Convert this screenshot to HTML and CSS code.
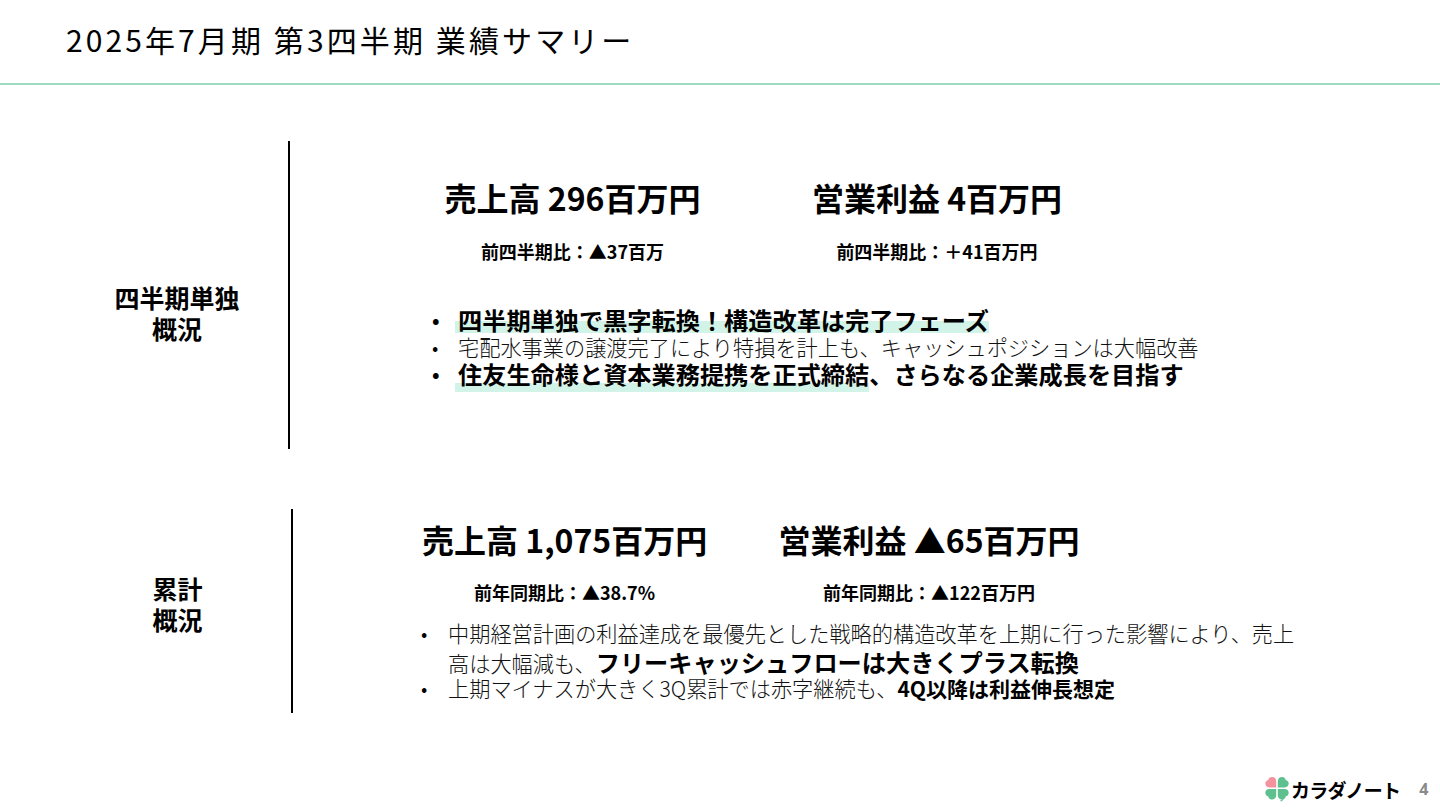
FILE: index.html
```html
<!DOCTYPE html>
<html lang="ja">
<head>
<meta charset="utf-8">
<title>業績サマリー</title>
<link rel="stylesheet" href="styles.css">
</head>
<body>
<div class="slide">
  <header class="head"><h1 class="title">2025年7月期 第3四半期 業績サマリー</h1></header>
  <main class="main">
    <section class="sec sec-q">
      <h2 class="label">四半期単独<br>概況</h2>
      <div class="body">
        <div class="stats">
          <div class="stat stat-q1"><p class="big">売上高 296百万円</p><p class="sub">前四半期比：▲37百万</p></div>
          <div class="stat stat-q2"><p class="big">営業利益 4百万円</p><p class="sub">前四半期比：＋41百万円</p></div>
        </div>
        <ul class="list">
          <li class="li-b"><span class="hl">四半期単独で黒字転換！構造改革は完了フェーズ</span></li>
          <li class="li-n">宅配水事業の譲渡完了により特損を計上も、キャッシュポジションは大幅改善</li>
          <li class="li-b"><span class="hl hl-low">住友生命様と資本業務提携を正式締結</span>、さらなる企業成長を目指す</li>
        </ul>
      </div>
    </section>
    <section class="sec sec-c">
      <h2 class="label">累計<br>概況</h2>
      <div class="body">
        <div class="stats">
          <div class="stat stat-c1"><p class="big">売上高 1,075百万円</p><p class="sub">前年同期比：▲38.7%</p></div>
          <div class="stat stat-c2"><p class="big">営業利益 ▲65百万円</p><p class="sub">前年同期比：▲122百万円</p></div>
        </div>
        <ul class="list list-c">
          <li>中期経営計画の利益達成を最優先とした戦略的構造改革を上期に行った影響により、売上高は大幅減も、<b class="em">フリーキャッシュフローは大きくプラス転換</b></li>
          <li>上期マイナスが大きく3Q累計では赤字継続も、<b class="em2">4Q以降は利益伸長想定</b></li>
        </ul>
      </div>
    </section>
  </main>
  <footer class="foot">
    <svg class="clover" viewBox="0 0 24 26" width="24" height="26" aria-hidden="true">
      <path fill="#f4929e" d="M11.2 11.4V5.2C11.2 2.6 9.4 1 7 1c-2 0-3.400 1.300-3.700 3C1.600 4.300.300 5.700.300 7.600c0 2.300 1.600 3.800 4.100 3.800z"/>
      <path fill="#5fc08f" d="M12.800 11.400V5.200c0-2.600 1.800-4.200 4.200-4.200 2 0 3.400 1.300 3.700 3 1.700.300 3 1.700 3 3.600 0 2.300-1.600 3.800-4.100 3.800z"/>
      <path fill="#5fc08f" d="M11.200 13v6.200c0 2.600-1.800 4.200-4.200 4.200-2 0-3.400-1.300-3.700-3-1.700-.300-3-1.700-3-3.600C.300 14.500 1.900 13 4.400 13z"/>
      <path fill="#5fc08f" d="M12.800 13v6.200c0 2.600 1.800 4.200 4.200 4.200 2 0 3.400-1.300 3.700-3 1.700-.300 3-1.700 3-3.600 0-2.300-1.600-3.800-4.100-3.800z"/>
      <path fill="none" stroke="#5fc08f" stroke-width="1.200" d="M15.500 25c1.200-.4 2-1 2.500-2"/>
    </svg>
    <span class="brand">カラダノート</span>
    <span class="page">4</span>
  </footer>
</div>
</body>
</html>
```
FILE: styles.css
```css
* { box-sizing: border-box; }
html, body { margin: 0; padding: 0; background: #fff; }
body { font-family: "Noto Sans CJK JP", "Noto Sans", sans-serif; color: #000; }
p, h1, h2, ul { margin: 0; padding: 0; }
.slide { width: 1440px; height: 810px; overflow: hidden; display: flex; flex-direction: column; }
.head { height: 85px; border-bottom: 2px solid #9fdcc4; padding: 18px 0 0 66px; flex: none; }
.title { font-size: 30px; font-weight: 400; letter-spacing: 3.1px; line-height: 42px; }
.main { flex: 1; display: flex; flex-direction: column; }
.sec { display: flex; }
.sec-q { height: 308px; margin-top: 56px; }
.sec-c { height: 204px; margin-top: 60px; }
.label { font-size: 25px; font-weight: 700; line-height: 30.5px; text-align: center; flex: none; }
.sec-q .label { width: 224px; margin-left: 65px; margin-right: -1px; padding-top: 141px; }
.sec-c .label { width: 231px; margin-left: 62px; margin-right: -2px; padding-top: 64px; }
.body { border-left: 2px solid #000; flex: 1; }
.stats { display: flex; }
.stat { text-align: center; }
.big { font-size: 32px; font-weight: 700; line-height: 44px; white-space: nowrap; }
.sub { font-size: 18px; font-weight: 700; line-height: 26px; white-space: nowrap; }
.sec-q .stats { padding: 34px 0 0 154px; }
.sec-q .big + .sub { margin-top: 19px; }
.stat-q1 { width: 257px; }
.stat-q2 { width: 252px; margin-left: 110px; }
.sec-c .stats { padding: 8px 0 0 129px; }
.sec-c .big + .sub { margin-top: 18px; }
.stat-c1 { width: 285px; }
.stat-c2 { width: 302px; margin-left: 71px; }
.list { list-style: none; }
.sec-q .list { margin: 41px 0 0 168px; }
.list li { position: relative; }
.list li::before { content: "•"; position: absolute; font-size: 20px; line-height: 1; }
.li-b { font-size: 24.2px; font-weight: 700; line-height: 30px; white-space: nowrap; }
.li-n { font-size: 21.2px; font-weight: 300; line-height: 24px; color: #111; white-space: nowrap; }
.sec-q .list li::before { left: -26px; top: 50%; transform: translateY(-50%); color: #000; }
.hl { background: linear-gradient(to bottom, transparent 19.5px, #d2f3e7 19.5px, #d2f3e7 31.5px, transparent 31.5px); margin-left: -3px; padding-left: 3px; }
.hl-low { background: linear-gradient(to bottom, transparent 27.5px, #d2f3e7 27.5px, #d2f3e7 36.5px, transparent 36.5px); padding-bottom: 3px; }
.sec-c .list { margin: 13px 0 0 155px; width: 850px; }
.list-c li { font-size: 21.2px; font-weight: 300; line-height: 29px; color: #111; }
.list-c li + li { margin-top: -4px; }
.list-c li::before { left: -27px; top: 5px; color: #000; }
.em { font-size: 24.2px; color: #000; font-weight: 700; }
.em2 { font-size: 21px; color: #000; font-weight: 700; }
.foot { height: 50px; flex: none; display: flex; align-items: center; padding-left: 1265px; padding-top: 8px; }
.clover { flex: none; }
.brand { font-size: 19px; font-weight: 700; margin-left: 2px; white-space: nowrap; letter-spacing: -0.7px; }
.page { font-size: 16px; font-weight: 700; color: #8a8a8a; margin-left: 19px; font-family: "Noto Sans", sans-serif; }
```
